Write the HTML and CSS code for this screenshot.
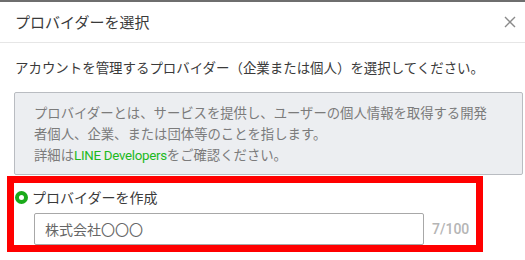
FILE: index.html
```html
<!DOCTYPE html>
<html lang="ja">
<head>
    <meta charset="UTF-8">
    <title>プロバイダーを選択</title>
    <link rel="stylesheet" href="styles.css">
</head>
<body>

<div class="modal">
    <div class="modal-header">
        <h2 class="modal-title">プロバイダーを選択</h2>
        <span class="modal-close">
            <svg width="12" height="12" viewBox="0 0 12 12"><path d="M1 1 L11 11 M11 1 L1 11" stroke="#8a8a8a" stroke-width="1.4" fill="none"/></svg>
        </span>
    </div>

    <div class="modal-body">
        <p class="lead">アカウントを管理するプロバイダー（企業または個人）を選択してください。</p>

        <div class="note">
            プロバイダーとは、サービスを提供し、ユーザーの個人情報を取得する開発者個人、企業、または団体等のことを指します。<br>
            詳細は<a href="#" class="note-link">LINE Developers</a>をご確認ください。
        </div>

        <div class="options">
            <div class="option">
                <label class="radio">
                    <span class="radio-mark checked"></span>
                    プロバイダーを作成
                </label>
                <div class="field">
                    <input class="field-input" type="text" value="株式会社〇〇〇">
                    <span class="field-count">7/100</span>
                </div>
            </div>

            <div class="option">
                <label class="radio">
                    <span class="radio-mark"></span>
                    既存のプロバイダーを選択
                </label>
            </div>

            <!-- 注釈の赤枠 -->
            <div class="highlight"></div>
        </div>
    </div>
</div>

</body>
</html>
```

FILE: styles.css
```css
body {
    margin: 0;
    padding: 0;
    background: #fff;
    font-family: "Noto Sans CJK JP", sans-serif;
    color: #333;
    overflow: hidden;
}

.modal {
    width: 525px;
    border-top: 2px solid #6e6e6e;
    background: #fff;
}

.modal-header {
    height: 40px;
    display: flex;
    align-items: center;
    justify-content: space-between;
    padding: 0 5px 0 15px;
    border-bottom: 1px solid #e6e6e6;
}

.modal-title {
    margin: 0;
    font-size: 15px;
    font-weight: normal;
    color: #3a3a3a;
    line-height: 20px;
}

.modal-close {
    display: flex;
    width: 12px;
    height: 12px;
    margin-right: 4px;
    cursor: pointer;
}

.modal-body {
    padding: 14px 2px 0 14px;
}

.lead {
    margin: 0 0 14px 1px;
    font-size: 13.45px;
    line-height: 21px;
    color: #3a3a3a;
}

.note {
    padding: 9px 30px 8px 19px;
    background: #eceef1;
    border: 1px solid #b9bcc1;
    border-radius: 2px;
    font-size: 13.35px;
    line-height: 21px;
    color: #7b7b7b;
}

.note-link {
    color: #1db91d;
    text-decoration: none;
    font-family: Roboto, "Noto Sans CJK JP", sans-serif;
    letter-spacing: -0.3px;
}

.options {
    position: relative;
    padding-top: 13px;
}

.option {
    display: flex;
    flex-direction: column;
    gap: 7px;
    margin-bottom: 14px;
}

.radio {
    display: flex;
    align-items: center;
    gap: 4px;
    font-size: 14px;
    line-height: 18px;
    color: #3a3a3a;
    margin-left: 1px;
}

.radio-mark {
    width: 13px;
    height: 13px;
    border-radius: 50%;
    background: #d8d8d8;
    box-sizing: border-box;
}

.radio-mark.checked {
    background: #fff;
    border: 4px solid #1aaa1a;
}

.field {
    display: flex;
    align-items: center;
    gap: 8px;
    margin-left: 20px;
}

.field-input {
    width: 390px;
    height: 32px;
    box-sizing: border-box;
    border: 1px solid #a8a8a8;
    border-radius: 2px;
    padding: 0 10px;
    font-family: "Noto Sans CJK JP", sans-serif;
    font-size: 14px;
    color: #666;
    outline: none;
}

.field-count {
    font-family: Roboto, sans-serif;
    font-size: 14px;
    font-weight: 500;
    color: #b5b5b5;
}

.highlight {
    position: absolute;
    left: -7px;
    top: 1px;
    width: 476px;
    height: 76px;
    box-sizing: border-box;
    border: 7px solid #ff0000;
    pointer-events: none;
}
```
